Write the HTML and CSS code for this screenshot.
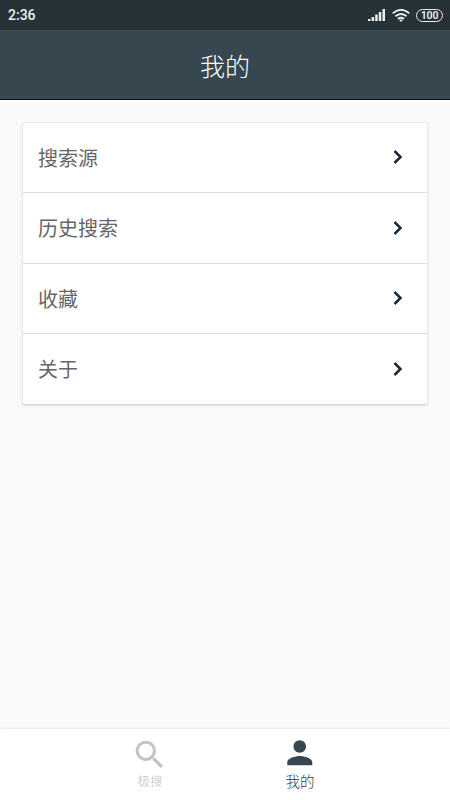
FILE: index.html
```html
<!DOCTYPE html>
<html lang="zh-CN">
<head>
<meta charset="utf-8">
<title>我的</title>
<link rel="stylesheet" href="styles.css">
</head>
<body>
<div class="status">
  <span class="time">2:36</span>
  <div class="indicators">
    <svg class="signal" viewBox="0 0 18 12"><path d="M0 10h2.5v2H0zM3.6 8h2.5v4H3.6zM7.2 5.5h2.5V12H7.2zM10.8 3h2.5v9h-2.5zM14.5 0H17v12h-2.5z"/></svg>
    <svg class="wifi" viewBox="0 0 18 13"><path d="M.7 4.4Q9-2.7 17.3 4.4M3.4 7.3Q9 2.7 14.6 7.3M6 10Q9 7.7 12 10"/><path class="dot" d="M7.1 11.1Q9 9.7 10.9 11.1L9 13z"/></svg>
    <span class="battery">100</span>
  </div>
</div>
<header class="header">我的</header>
<main class="content">
  <ul class="card">
    <li class="row"><span>搜索源</span><svg class="chevron" viewBox="0 0 10 16"><path d="M1.5 2 7.5 8l-6 6"/></svg></li>
    <li class="row"><span>历史搜索</span><svg class="chevron" viewBox="0 0 10 16"><path d="M1.5 2 7.5 8l-6 6"/></svg></li>
    <li class="row"><span>收藏</span><svg class="chevron" viewBox="0 0 10 16"><path d="M1.5 2 7.5 8l-6 6"/></svg></li>
    <li class="row"><span>关于</span><svg class="chevron" viewBox="0 0 10 16"><path d="M1.5 2 7.5 8l-6 6"/></svg></li>
  </ul>
</main>
<nav class="tabs">
  <a class="tab">
    <svg viewBox="0 0 24 24"><path d="M15.5 14h-.79l-.28-.27C15.41 12.59 16 11.11 16 9.5 16 5.91 13.09 3 9.5 3S3 5.91 3 9.5 5.91 16 9.5 16c1.61 0 3.09-.59 4.23-1.57l.27.28v.79l5 4.99L20.49 19l-4.99-5zm-6 0C7.01 14 5 11.99 5 9.5S7.01 5 9.5 5 14 7.01 14 9.5 11.99 14 9.5 14z"/></svg>
    <span>极搜</span>
  </a>
  <a class="tab active">
    <svg viewBox="0 0 24 24"><path d="M12 12c2.21 0 4-1.79 4-4s-1.79-4-4-4-4 1.79-4 4 1.79 4 4 4zm0 2c-2.67 0-8 1.34-8 4v2h16v-2c0-2.66-5.33-4-8-4z"/></svg>
    <span>我的</span>
  </a>
</nav>
</body>
</html>
```
FILE: styles.css
```css
* { box-sizing: border-box; }
body {
  margin: 0;
  height: 800px;
  display: flex;
  flex-direction: column;
  overflow: hidden;
  background: #fafafa;
  font-family: Roboto, "Noto Sans CJK SC", sans-serif;
}
.status {
  height: 30px;
  padding: 0 7px 0 8px;
  display: flex;
  align-items: center;
  justify-content: space-between;
  background: #263238;
  color: #eceff0;
}
.time { font-size: 14px; font-weight: 500; line-height: 30px; }
.indicators { display: flex; align-items: center; }
.signal { width: 18px; height: 12px; margin-right: 6px; fill: #eceff0; }
.wifi { width: 18px; height: 13px; margin-right: 6px; fill: none; stroke: #eceff0; stroke-width: 1.9; }
.wifi .dot { fill: #eceff0; stroke: none; }
.battery {
  width: 27px;
  height: 13px;
  border: 1px solid #eceff0;
  border-radius: 7px;
  font-size: 10.5px;
  font-weight: 600;
  line-height: 11px;
  letter-spacing: -.2px;
  text-align: center;
}
.header {
  height: 70px;
  padding-top: 3px;
  border-bottom: 1px solid #0a1620;
  background: #37474f;
  color: #fff;
  font-size: 25px;
  font-weight: 300;
  line-height: 70px;
  text-align: center;
}
.content { flex: 1; padding: 22px; }
.card {
  margin: 0;
  padding: 0;
  display: grid;
  grid-template-rows: 69px 71px 70px 71px;
  list-style: none;
  background: #fff;
  border: 1px solid #e9e9e9;
  border-bottom-color: #d8d8d8;
  border-radius: 3px;
  box-shadow: 0 1px 2px rgba(0, 0, 0, .12);
}
.row {
  padding: 0 24px 0 15px;
  display: flex;
  align-items: center;
  justify-content: space-between;
  color: #666;
  font-size: 20px;
}
.row + .row { border-top: 1px solid #dcdcdc; }
.row span { margin-top: -1px; }
.chevron { width: 10px; height: 16px; margin-bottom: 1px; fill: none; stroke: #1a2a38; stroke-width: 2.5; }
.tabs {
  height: 71px;
  padding: 0 75px;
  display: flex;
  background: #fff;
  box-shadow: 0 0 3px rgba(0, 0, 0, .15);
}
.tab {
  flex: 1;
  padding-top: 7px;
  display: flex;
  flex-direction: column;
  align-items: center;
  color: #bdbdbd;
  font-size: 12.5px;
  line-height: 16px;
  font-weight: 300;
}
.tab svg { width: 37.5px; height: 37.5px; fill: #c4c4c4; }
.active { padding-top: 5px; color: #2c3c44; font-size: 14.5px; line-height: 21px; }
.active svg { fill: #37474f; }
```
